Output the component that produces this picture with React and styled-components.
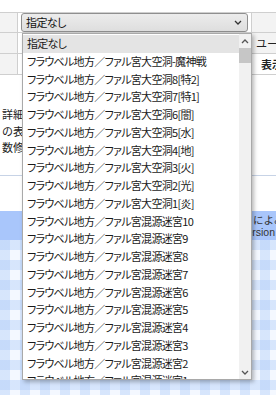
import React from "react";
import styled, { createGlobalStyle } from "styled-components";

const GlobalStyle = createGlobalStyle`
  html, body {
    margin: 0;
    padding: 0;
  }
  body {
    font-family: "Noto Sans CJK JP", "Noto Sans", sans-serif;
    color: #222;
    background: #fff;
  }
`;

const Page = styled.div`
  position: relative;
  width: 276px;
  height: 395px;
  overflow: hidden;
  display: flex;
  flex-direction: column;
`;

const InfoGrid = styled.div`
  margin-top: 12px;
  display: grid;
  grid-template-columns: 18px 234px 60px;
  grid-template-rows: 20px 21px 21px;
  border-top: 1px solid #cfcfcf;
  flex-shrink: 0;
`;

const Cell = styled.div`
  border-right: 1px solid #cfcfcf;
  border-bottom: 1px solid #cfcfcf;
  background: ${(p) => (p.$head ? "#f3f3f3" : "#fff")};
  font-size: 11px;
  font-weight: ${(p) => (p.$bold ? 700 : 400)};
  line-height: 21px;
  padding-left: ${(p) => p.$indent || 0}px;
  white-space: nowrap;
  overflow: hidden;
  display: flex;
  align-items: center;
`;

const SelectBox = styled.div`
  margin-left: 3px;
  width: 227px;
  height: 19px;
  box-sizing: border-box;
  border: 1px solid #8f8f8f;
  border-radius: 3px;
  background: linear-gradient(#ececec, #dedede);
  display: flex;
  align-items: center;
  justify-content: space-between;
  padding: 0 5px 0 4px;
  font-size: 11px;
  letter-spacing: -0.6px;
  font-feature-settings: "palt";
  color: #111;
`;

const Notes = styled.div`
  padding: 31px 0 0 2px;
  height: 69px;
  font-size: 11px;
  line-height: 16.5px;
  white-space: nowrap;
  border-bottom: 1px solid #c7d3e6;
  flex-shrink: 0;
`;

const Spacer = styled.div`
  height: 35px;
  flex-shrink: 0;
`;

const Band = styled.div`
  height: 29px;
  background: #a9c6fb;
  padding-top: 3px;
  box-sizing: border-box;
  font-size: 10.5px;
  line-height: 12px;
  flex-shrink: 0;
`;

const BandLine = styled.div`
  padding-left: ${(p) => p.$indent}px;
  white-space: nowrap;
  font-family: ${(p) => (p.$latin ? '"Liberation Sans", sans-serif' : "inherit")};
  color: #333;
`;

const Plaid = styled.div`
  flex: 1;
  background-color: #f4f8ff;
  background-image: linear-gradient(
      90deg,
      rgba(174, 204, 248, 0.42) 50%,
      transparent 50%
    ),
    linear-gradient(rgba(174, 204, 248, 0.42) 50%, transparent 50%);
  background-size: 20px 20px;
`;

const Dropdown = styled.div`
  position: absolute;
  left: 22px;
  top: 33px;
  width: 230px;
  height: 347px;
  box-sizing: border-box;
  border: 1px solid #a9a9a9;
  background: #fff;
  box-shadow: 2px 2px 4px rgba(0, 0, 0, 0.28);
  display: flex;
  overflow: hidden;
`;

const OptionList = styled.div`
  flex: 1;
  padding-top: 1px;
  overflow: hidden;
`;

const Option = styled.div`
  height: 17.75px;
  line-height: 17.75px;
  padding-left: 4px;
  font-size: 11px;
  letter-spacing: -0.7px;
  font-feature-settings: "palt";
  white-space: nowrap;
  background: ${(p) => (p.$selected ? "#e4e4e4" : "transparent")};
  color: #1a1a1a;
`;

const ScrollBar = styled.div`
  width: 12px;
  background: #f1f1f1;
  display: flex;
  flex-direction: column;
  align-items: center;
`;

const ArrowSlot = styled.div`
  height: 14px;
  display: flex;
  align-items: center;
  justify-content: center;
`;

const Thumb = styled.div`
  width: 12px;
  height: 15px;
  background: #c6c6c6;
`;

const Track = styled.div`
  flex: 1;
`;

const Chevron = ({ up, color = "#333" }) => (
  <svg width="8" height="5" viewBox="0 0 8 5">
    <polyline
      points={up ? "1,4 4,1 7,4" : "1,1 4,4 7,1"}
      fill="none"
      stroke={color}
      strokeWidth="1.3"
    />
  </svg>
);

const options = [
  "指定なし",
  "フラウベル地方／ファル宮大空洞-魔神戦",
  "フラウベル地方／ファル宮大空洞8[特2]",
  "フラウベル地方／ファル宮大空洞7[特1]",
  "フラウベル地方／ファル宮大空洞6[闇]",
  "フラウベル地方／ファル宮大空洞5[水]",
  "フラウベル地方／ファル宮大空洞4[地]",
  "フラウベル地方／ファル宮大空洞3[火]",
  "フラウベル地方／ファル宮大空洞2[光]",
  "フラウベル地方／ファル宮大空洞1[炎]",
  "フラウベル地方／ファル宮混源迷宮10",
  "フラウベル地方／ファル宮混源迷宮9",
  "フラウベル地方／ファル宮混源迷宮8",
  "フラウベル地方／ファル宮混源迷宮7",
  "フラウベル地方／ファル宮混源迷宮6",
  "フラウベル地方／ファル宮混源迷宮5",
  "フラウベル地方／ファル宮混源迷宮4",
  "フラウベル地方／ファル宮混源迷宮3",
  "フラウベル地方／ファル宮混源迷宮2",
  "フラウベル地方／ファル宮混源迷宮1",
];

export default function App() {
  return (
    <Page>
      <GlobalStyle />
      <InfoGrid>
        <Cell $head />
        <Cell>
          <SelectBox>
            <span>指定なし</span>
            <Chevron />
          </SelectBox>
        </Cell>
        <Cell $head />
        <Cell $head />
        <Cell />
        <Cell $head $indent={4}>ユーザー</Cell>
        <Cell $head />
        <Cell />
        <Cell $bold $indent={9}>表示</Cell>
      </InfoGrid>
      <Notes>
        <div>詳細</div>
        <div>の表</div>
        <div>数修:</div>
      </Notes>
      <Spacer />
      <Band>
        <BandLine $indent={253}>によみ</BandLine>
        <BandLine $indent={240} $latin>
          Version
        </BandLine>
      </Band>
      <Plaid />
      <Dropdown>
        <OptionList>
          {options.map((o, i) => (
            <Option key={o} $selected={i === 0}>
              {o}
            </Option>
          ))}
        </OptionList>
        <ScrollBar>
          <ArrowSlot>
            <Chevron up color="#555" />
          </ArrowSlot>
          <Thumb />
          <Track />
          <ArrowSlot>
            <Chevron color="#555" />
          </ArrowSlot>
        </ScrollBar>
      </Dropdown>
    </Page>
  );
}
